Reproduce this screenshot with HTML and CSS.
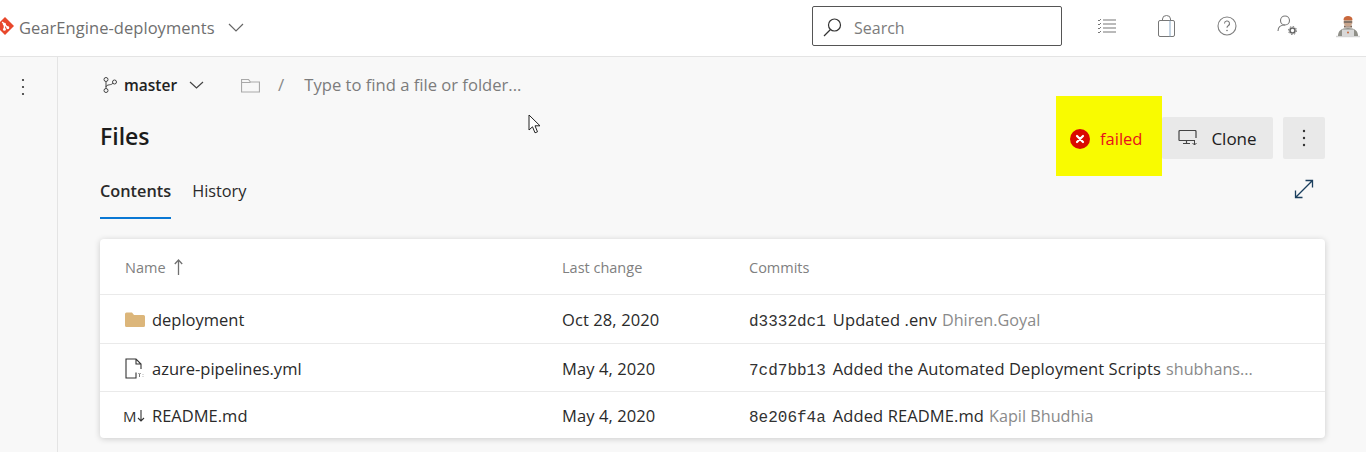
FILE: index.html
```html
<!DOCTYPE html>
<html lang="en">
<head>
<meta charset="utf-8">
<title>Files</title>
<link rel="stylesheet" href="styles.css">
</head>
<body>
<header class="topbar">
  <div class="project">
    <svg class="logo" width="18" height="18" viewBox="0 0 16 16"><path d="M8 0 16 8 8 16 0 8Z" fill="#e8472b"/><path d="M5.500 4.500 11 10M7.500 6.500V11" stroke="#fff" stroke-width="1.300" fill="none"/><circle cx="7.500" cy="6.500" r="1.300" fill="#fff"/><circle cx="7.500" cy="11" r="1.300" fill="#fff"/><circle cx="10.500" cy="9.500" r="1.300" fill="#fff"/></svg>
    <span class="project-name">GearEngine-deployments</span>
    <svg class="chev" width="16" height="9" viewBox="0 0 16 9"><path d="M1 1l7 7 7-7" fill="none" stroke="#666" stroke-width="1.200"/></svg>
  </div>
  <div class="search">
    <svg width="19" height="19" viewBox="0 0 19 19"><circle cx="11.500" cy="7" r="6" fill="none" stroke="#333" stroke-width="1.200"/><path d="M7.500 11.500 1 18" stroke="#333" stroke-width="1.300"/></svg>
    <span>Search</span>
  </div>
  <nav class="top-icons">
    <svg width="20" height="16" viewBox="0 0 20 16"><path d="M6 2h13M6 6h13M6 10h13M6 14h13" stroke="#777" stroke-width="1.200"/><path d="M1 2l1 1 2-2M1 6l1 1 2-2M1 10l1 1 2-2M1 14l1 1 2-2" stroke="#777" fill="none"/></svg>
    <svg width="17" height="22" viewBox="0 0 17 22"><rect x=".5" y="5.500" width="16" height="16" rx="1.500" fill="none" stroke="#777"/><path d="M12 5.500v16" stroke="#8aa9c6"/><path d="M4.500 5.500V4a4 3.500 0 0 1 8 0v1.500" fill="none" stroke="#777"/></svg>
    <svg width="20" height="20" viewBox="0 0 20 20"><circle cx="10" cy="10" r="9" fill="none" stroke="#808080" stroke-width="1.100"/><path d="M7.500 7.500a2.500 2.500 0 1 1 3.700 2.200c-.8.500-1.200 1-1.200 2" fill="none" stroke="#777" stroke-width="1.100"/><circle cx="10" cy="14.500" r=".8" fill="#777"/></svg>
    <svg width="21" height="21" viewBox="0 0 21 21"><circle cx="8" cy="5.500" r="4.500" fill="none" stroke="#777" stroke-width="1.100"/><path d="M1 16c0-4 3-6 7-6" fill="none" stroke="#777" stroke-width="1.100"/><circle cx="15.500" cy="15.500" r="2.500" fill="none" stroke="#666" stroke-width="1.600"/><circle cx="15.500" cy="15.500" r="4" fill="none" stroke="#666" stroke-width="1" stroke-dasharray="1.500 1.600"/></svg>
    <svg class="avatar" width="24" height="24" viewBox="0 0 24 24"><path d="M0 22.500h24" stroke="#d5d5d5" stroke-width="1.500"/><path d="M2 22c0-5 3-8 10-8s10 3 10 8z" fill="#8f8f88"/><circle cx="12" cy="8" r="4.500" fill="#c9a58c"/><path d="M7.500 6c0-3 2-4 4.500-4s4.500 1 4.500 4z" fill="#c9683c"/><path d="M8 8h8" stroke="#555" stroke-width="1.200"/><path d="M8 11c1 2 7 2 8 0v2.500H8z" fill="#7d6555"/><rect x="6" y="15.500" width="12" height="6.500" fill="#d8d8d8"/><circle cx="12" cy="18.500" r="1" fill="#c9683c"/></svg>
  </nav>
</header>
<div class="shell">
  <aside class="rail">
    <svg width="4" height="18" viewBox="0 0 4 18"><circle cx="2" cy="2" r="1.100" fill="#333"/><circle cx="2" cy="9" r="1.100" fill="#333"/><circle cx="2" cy="16" r="1.100" fill="#333"/></svg>
  </aside>
  <main class="content">
    <div class="crumbs">
      <svg width="14" height="16" viewBox="0 0 14 16"><circle cx="3" cy="2.500" r="2" fill="none" stroke="#444"/><circle cx="3" cy="13.500" r="2" fill="none" stroke="#444"/><circle cx="11.500" cy="5" r="2" fill="none" stroke="#444"/><path d="M3 4.500v7M3 10c0-3 6.500-1.500 6.800-4" fill="none" stroke="#444"/></svg>
      <span class="branch">master</span>
      <svg class="branch-chev" width="15" height="8" viewBox="0 0 15 8"><path d="M1 1l6.500 6L14 1" fill="none" stroke="#444" stroke-width="1.200"/></svg>
      <svg class="folder-outline" width="19" height="15" viewBox="0 0 19 15"><path d="M.5 13.500V1.500h7l2 2.500h9v10H.5zM.5 4.500h9" fill="none" stroke="#a9a9a9" stroke-width="1.200"/></svg>
      <span class="slash">/</span>
      <span class="find">Type to find a file or folder...</span>
    </div>
    <div class="title-row">
      <h1>Files</h1>
      <div class="actions">
        <div class="status">
          <svg width="20" height="20" viewBox="0 0 20 20"><circle cx="10" cy="10" r="10" fill="#da0a00"/><path d="M7 7l6 6M13 7l-6 6" stroke="#fff" stroke-width="2.200" stroke-linecap="round"/></svg>
          <span>failed</span>
        </div>
        <button class="btn clone">
          <svg width="20" height="16" viewBox="0 0 20 16"><path d="M16 10.500H1.500a1 1 0 0 1-.5-.500V1.500a1 1 0 0 1 1-1h15a1 1 0 0 1 1 1V8M5 13.500h7M8.500 10.500v3" fill="none" stroke="#444" stroke-width="1.200"/><path d="M16.500 10v5M14.500 13l2 2 2-2" fill="none" stroke="#444"/></svg>
          <span>Clone</span>
        </button>
        <button class="btn more">
          <svg width="4" height="18" viewBox="0 0 4 18"><circle cx="2" cy="2" r="1.200" fill="#333"/><circle cx="2" cy="9" r="1.200" fill="#333"/><circle cx="2" cy="16" r="1.200" fill="#333"/></svg>
        </button>
      </div>
    </div>
    <div class="tabs-row">
      <div class="tabs">
        <span class="tab active">Contents</span>
        <span class="tab">History</span>
      </div>
      <svg class="expand" width="20" height="20" viewBox="0 0 20 20"><path d="M1.500 18.500 18.500 1.500M11.500 1.500h7v7M1.500 11.500v7h7" fill="none" stroke="#1b3f5e" stroke-width="1.300"/></svg>
    </div>
    <section class="card">
      <div class="row head">
        <div class="name-cell"><span>Name</span><svg width="9" height="16" viewBox="0 0 9 16"><path d="M4.500 16V1M.8 5l3.700-4 3.700 4" fill="none" stroke="#707070" stroke-width="1.300"/></svg></div>
        <div>Last change</div>
        <div>Commits</div>
      </div>
      <div class="row">
        <div class="name-cell"><span class="icon"><svg width="20" height="15" viewBox="0 0 20 15"><path d="M0 2a1.500 1.500 0 0 1 1.500-1.500h5.500l2 2.500h9.500A1.500 1.500 0 0 1 20 4.500v9a1.500 1.500 0 0 1-1.500 1.500h-17A1.500 1.500 0 0 1 0 13.500z" fill="#dcb67a"/></svg></span><span>deployment</span></div>
        <div class="date">Oct 28, 2020</div>
        <div class="commit"><code>d3332dc1</code><span class="msg">Updated .env</span><span class="author">Dhiren.Goyal</span></div>
      </div>
      <div class="row">
        <div class="name-cell"><span class="icon"><svg width="20" height="21" viewBox="0 0 20 21"><path d="M11 14.500V20H1V1h10l5 5v5M11 1v5h5" fill="none" stroke="#333" stroke-width="1.100"/><path d="M13.500 15l1 1.500 1-1.500M14.500 16.500V19M18 16v.5M18 18.500v.5" fill="none" stroke="#555" stroke-width=".8"/></svg></span><span>azure-pipelines.yml</span></div>
        <div class="date">May 4, 2020</div>
        <div class="commit"><code>7cd7bb13</code><span class="msg">Added the Automated Deployment Scripts</span><span class="author">shubhans...</span></div>
      </div>
      <div class="row">
        <div class="name-cell"><span class="icon md">M<svg width="8" height="12" viewBox="0 0 8 12"><path d="M4 0v11M1 8l3 3 3-3" fill="none" stroke="#333" stroke-width="1.100"/></svg></span><span>README.md</span></div>
        <div class="date">May 4, 2020</div>
        <div class="commit"><code>8e206f4a</code><span class="msg">Added README.md</span><span class="author">Kapil Bhudhia</span></div>
      </div>
    </section>
  </main>
</div>
<svg class="cursor" width="14" height="21" viewBox="0 0 14 21"><path d="M1 1v15l3.500-3.200 2.500 6 2.500-1-2.500-6H12z" fill="#fff" stroke="#222" stroke-width="1"/></svg>
</body>
</html>
```
FILE: styles.css
```css
* { box-sizing: border-box; }
html, body { margin: 0; height: 452px; overflow: hidden; }
body { font-family: "Open Sans", "Noto Sans", sans-serif; background: #f8f8f8; color: #202020; font-size: 15px; position: relative; }
.topbar { height: 57px; background: #fff; border-bottom: 1px solid #e4e4e4; display: flex; align-items: center; }
.project { display: flex; align-items: center; width: 812px; flex: none; }
.logo { flex: none; margin-left: -4px; margin-right: 5px; margin-top: -4px; }
.project-name { color: #6f6f6f; font-size: 16.500px; letter-spacing: 0.05px; margin-top: -2px; }
.chev { margin-left: 13px; margin-top: -2px; }
.search { width: 250px; height: 40px; border: 1px solid #555; border-radius: 2px; display: flex; align-items: center; padding-left: 10px; padding-top: 3px; gap: 12px; color: #7c7c7c; font-size: 16px; flex: none; margin-top: -4px; }
.top-icons { display: flex; align-items: center; margin-left: 35px; margin-top: -5px; }
.top-icons svg:nth-child(1) { margin-right: 41px; }
.top-icons svg:nth-child(2) { margin-right: 42px; }
.top-icons svg:nth-child(3) { margin-right: 40px; }
.top-icons svg:nth-child(4) { margin-right: 38px; }
.shell { display: flex; height: 395px; }
.rail { width: 58px; flex: none; border-right: 1px solid #e4e4e4; display: flex; justify-content: center; padding-top: 21px; padding-right: 11px; }
.rail svg { display: block; }
.content { flex: 1; padding: 0 41px 0 42px; min-width: 0; }
.crumbs { display: flex; align-items: center; height: 56px; padding-left: 3px; }
.branch { font-weight: 600; font-size: 15.500px; margin-left: 7px; color: #222; }
.branch-chev { margin-left: 12px; }
.folder-outline { margin-left: 37px; }
.slash { margin-left: 18px; margin-top: -2px; color: #888; font-size: 17px; }
.find { margin-left: 20px; margin-top: -2px; color: #7c7c7c; font-size: 16.600px; }
.title-row { display: flex; justify-content: space-between; align-items: center; height: 80px; margin-top: -17px; }
h1 { margin: 0; font-size: 23px; font-weight: 600; color: #1c1c1c; }
.actions { display: flex; align-items: center; }
.status { width: 106px; height: 80px; background: #f9fb00; display: flex; align-items: center; padding-left: 14px; padding-top: 5px; gap: 10px; color: #e8101c; font-size: 16.500px; }
.btn { border: 0; background: #e9e9e9; border-radius: 2px; height: 42px; margin-top: 4px; padding: 0; display: flex; align-items: center; justify-content: center; font-family: inherit; color: #202020; }
.clone { width: 111px; gap: 13px; font-size: 17px; font-weight: 500; margin-right: 10px; }
.more { width: 42px; }
.tabs-row { display: flex; justify-content: space-between; align-items: flex-start; height: 65px; margin-top: -2px; }
.tabs { display: flex; gap: 21px; }
.tab { height: 45px; display: flex; align-items: flex-start; padding-top: 6px; font-size: 16.300px; color: #2a2a2a; }
.tab.active { font-weight: 600; border-bottom: 2px solid #0a78d4; }
.expand { margin: 5px 11px 0 0; }
.card { background: #fff; border-radius: 4px; box-shadow: 0 1px 6px rgba(0,0,0,.18); }
.row { display: grid; grid-template-columns: 437px 187px 1fr; height: 48px; align-items: center; padding-left: 25px; padding-top: 1px; border-top: 1px solid #eaeaea; font-size: 16.500px; color: #2a2a2a; }
.row:nth-child(2) { height: 49px; }
.row:last-child { height: 47px; }
.head { height: 55px; padding-top: 1px; border-top: 0; font-size: 14.500px; color: #808080; font-weight: 500; }
.name-cell { display: flex; align-items: center; }
.head .name-cell { gap: 8px; }
.icon { width: 27px; display: flex; align-items: center; color: #333; font-size: 15px; }
.md { margin-left: -2px; margin-right: 2px; }
.date { letter-spacing: 0.1px; }
.commit { display: flex; align-items: baseline; white-space: nowrap; }
.msg { letter-spacing: 0.1px; }
code { font-family: "Liberation Mono", "DejaVu Sans Mono", monospace; font-size: 16px; color: #333; margin-right: 7px; }
.author { color: #8a8a8a; margin-left: 5px; font-size: 16.200px; }
.cursor { position: absolute; left: 528px; top: 114px; }
```
